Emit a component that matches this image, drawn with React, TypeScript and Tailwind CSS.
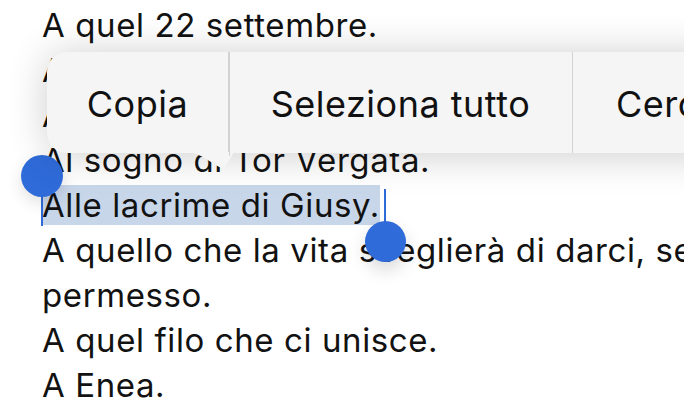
export default function App() {
  const lines = [
    "A quel 22 settembre.",
    "A quella sera a Roma.",
    "A quel primo abbraccio.",
    "Al sogno di Tor Vergata.",
  ];

  return (
    <div className="relative w-[684px] h-[406px] overflow-hidden bg-white font-['Inter',sans-serif]">
      {/* Text body */}
      <div className="pl-[42px] pt-[3px] text-[33px] tracking-[0.6px] leading-[45px] text-[#121212] whitespace-nowrap">
        {lines.map((line) => (
          <div key={line}>{line}</div>
        ))}
        <div>
          <span className="bg-[#c8d6ea]">Alle lacrime di Giusy.</span>
        </div>
        <div>A quello che la vita sceglierà di darci, se ci sarà</div>
        <div>permesso.</div>
        <div>A quel filo che ci unisce.</div>
        <div>A Enea.</div>
      </div>

      {/* Selection handles */}
      <div className="absolute left-[41px] top-[190px] w-[2px] h-[36px] bg-[#2f6bd9]" />
      <div className="absolute left-[21px] top-[155px] w-[42px] h-[42px] rounded-full bg-[#2f6bd9] shadow-[0_6px_16px_rgba(0,0,0,0.12)]" />
      <div className="absolute left-[384px] top-[189px] w-[2px] h-[40px] bg-[#2f6bd9]" />
      <div className="absolute left-[365px] top-[221px] w-[41px] h-[41px] rounded-full bg-[#2f6bd9] shadow-[0_8px_18px_rgba(0,0,0,0.15)]" />

      {/* Edit menu */}
      <div className="absolute left-[47px] top-[52px] h-[101px] w-[800px] flex rounded-l-[20px] bg-[#f5f5f5] shadow-[0_2px_40px_rgba(0,0,0,0.2)] text-[36px] tracking-[0.5px] text-[#111]">
        <div className="flex items-center justify-center w-[182px] border-r border-[#d2d2d2] pt-[2px]">
          Copia
        </div>
        <div className="flex items-center justify-center w-[344px] border-r border-[#d2d2d2] pt-[2px]">
          Seleziona tutto
        </div>
        <div className="flex items-center pl-[43px] pt-[2px]">Cerca</div>
      </div>
      <svg
        className="absolute left-[188px] top-[152px]"
        width="48"
        height="18"
        viewBox="0 0 48 18"
      >
        <path
          d="M0 0 C 14 1, 26 14, 34 16 C 38 16, 42 6, 46 0 Z"
          fill="#f5f5f5"
        />
      </svg>
      <div className="absolute left-[229px] top-[52px] w-px h-[104px] bg-[#d2d2d2]" />
    </div>
  );
}
